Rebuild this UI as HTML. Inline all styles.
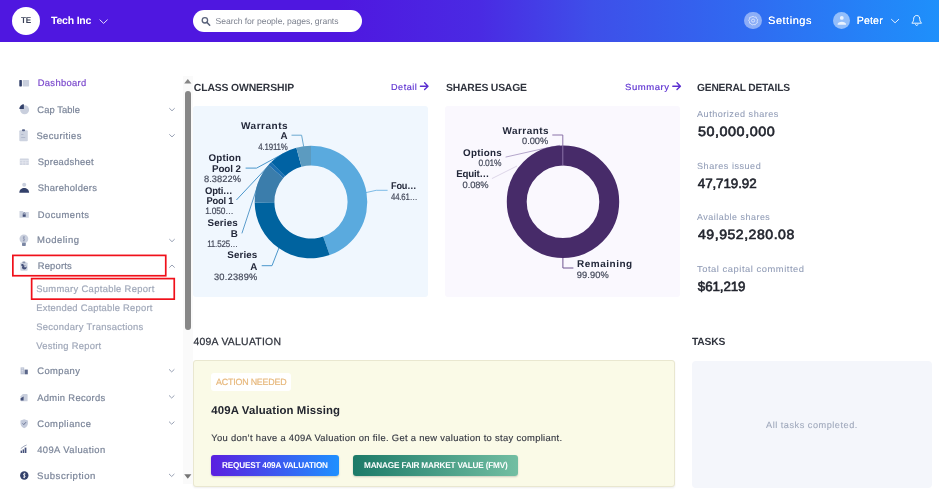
<!DOCTYPE html>
<html><head><meta charset="utf-8"><title>Dashboard</title>
<style>
html,body{margin:0;padding:0;}
body{text-rendering:geometricPrecision;width:939px;height:490px;position:relative;overflow:hidden;background:#fff;font-family:"Liberation Sans",sans-serif;}
.abs{position:absolute;}
#hdr{left:0;top:0;width:939px;height:42px;background:linear-gradient(90deg,#4f17e0 0%,#4f17e0 36%,#4a2ae3 51%,#3e4fe9 63%,#3168f0 78%,#1e90fb 100%);}
.card{position:absolute;border-radius:3px;}
</style></head><body>
<div id="hdr" class="abs"></div>
<div class="abs" style="left:12px;top:7px;width:28px;height:28px;border-radius:50%;background:#fff;"></div>
<div class="abs" style="left:193px;top:10px;width:169px;height:22px;border-radius:11px;background:#fff;"></div>
<div class="abs" style="left:744.4px;top:11.9px;width:17.4px;height:17.4px;border-radius:50%;background:rgba(255,255,255,.45);"></div>
<div class="abs" style="left:833.3px;top:12.2px;width:17px;height:17px;border-radius:50%;background:rgba(255,255,255,.5);"></div>

<!-- cards -->
<div class="card" style="left:193.2px;top:106px;width:234.7px;height:190.5px;background:#f0f7fe;"></div>
<div class="card" style="left:445.4px;top:106px;width:234.8px;height:190.5px;background:#faf8fe;"></div>
<div class="card" style="left:193px;top:360.3px;width:480px;height:124.8px;background:#fafae7;border:1px solid #e9e7d0;box-shadow:0 1px 2px rgba(0,0,0,.07);"></div>
<div class="card" style="left:691.5px;top:360.5px;width:240.5px;height:127px;background:#f4f6fb;border-radius:4px;"></div>
<div class="abs" style="left:211.3px;top:372.8px;width:79.8px;height:18px;border-radius:3px;background:#fff;"></div>
<div class="abs" style="left:211.3px;top:455px;width:127.3px;height:20.6px;border-radius:3px;background:linear-gradient(90deg,#5a1fe0,#1f90ff);box-shadow:0 1px 2px rgba(0,0,0,.18);"></div>
<div class="abs" style="left:352.7px;top:455px;width:165px;height:20.6px;border-radius:3px;background:linear-gradient(90deg,#1c7a68,#72bea2);box-shadow:0 1px 2px rgba(0,0,0,.18);"></div>

<!-- red boxes -->

<!-- scrollbar -->
<div class="abs" style="left:183px;top:76px;width:9.5px;height:408px;background:#fafafa;"></div>
<div class="abs" style="left:184.6px;top:91px;width:6.4px;height:239px;border-radius:3.2px;background:#878787;"></div>

<svg class="abs" style="left:0;top:0" width="939" height="490" viewBox="0 0 939 490">
<path d="M291.5,135.2H301.6L303.7,146.7" fill="none" stroke="#6aa9d0" stroke-width="1"/>
<path d="M245.6,168.1H256.6L283.0,153.8" fill="none" stroke="#4b97cc" stroke-width="1"/>
<path d="M236.4,200.0L270.1,164.1" fill="none" stroke="#4b97cc" stroke-width="1"/>
<path d="M241.9,233.4L258.6,182.7" fill="none" stroke="#5b9ccb" stroke-width="1"/>
<path d="M261.7,265.7H272L279.0,247.7" fill="none" stroke="#4b97cc" stroke-width="1"/>
<path d="M366.0,192.6L376.2,190.3H387.6" fill="none" stroke="#7dbbe6" stroke-width="1"/>
<path d="M311.00,145.70A56.3,56.3 0 0 1 329.70,255.10L323.16,236.52A36.6,36.6 0 0 0 311.00,165.40Z" fill="#5aaade"/>
<path d="M329.70,255.10A56.3,56.3 0 0 1 254.70,202.53L274.40,202.34A36.6,36.6 0 0 0 323.16,236.52Z" fill="#00639f"/>
<path d="M254.70,202.53A56.3,56.3 0 0 1 268.48,165.10L283.36,178.01A36.6,36.6 0 0 0 274.40,202.34Z" fill="#3b7dab"/>
<path d="M268.48,165.10A56.3,56.3 0 0 1 271.01,162.37L285.00,176.24A36.6,36.6 0 0 0 283.36,178.01Z" fill="#1a6fb2"/>
<path d="M271.01,162.37A56.3,56.3 0 0 1 296.34,147.64L301.47,166.66A36.6,36.6 0 0 0 285.00,176.24Z" fill="#0062a3"/>
<path d="M296.34,147.64A56.3,56.3 0 0 1 311.00,145.70L311.00,165.40A36.6,36.6 0 0 0 301.47,166.66Z" fill="#5c9bc0"/>
<path d="M491.9,178.6L517,166" fill="none" stroke="#ddd6e8" stroke-width="1"/>
<path d="M505.6,157.1L542,148.9L560,145.3" fill="none" stroke="#b4a6cb" stroke-width="1"/>
<path d="M562.9,258L562.9,268H573.4" fill="none" stroke="#6e5590" stroke-width="1"/>
<circle cx="563.0" cy="201.8" r="46.25" fill="none" stroke="#472b69" stroke-width="19.900000000000006"/>
<path d="M552.3,135H562.8V165.4" fill="none" stroke="#8a72a8" stroke-width="1"/><!-- header: chevrons -->
<path d="M99.6,19.6L103.6,23.4L107.6,19.6" fill="none" stroke="#e6ddff" stroke-width="1"/>
<path d="M891.2,19.1L895.1,22.8L899,19.1" fill="none" stroke="#e6f0ff" stroke-width="1"/>
<!-- search icon -->
<circle cx="204.9" cy="20.3" r="2.7" fill="none" stroke="#59627a" stroke-width="1.3"/>
<path d="M206.9,22.4L209.7,25.2" stroke="#59627a" stroke-width="1.5" stroke-linecap="round"/>
<!-- gear -->
<g transform="translate(753.1,20.6) scale(.82)" fill="none" stroke="#fff" stroke-opacity=".8" stroke-width="0.9" stroke-linejoin="round">
<path d="M0,-5.2L1.6,-4.2L3.6,-4.4L4.2,-2.5L5.6,-1.2L4.9,0.7L5.3,2.6L3.6,3.5L2.6,5.1L0.7,4.8L-1.2,5.4L-2.4,3.9L-4.3,3.2L-4.3,1.3L-5.4,-0.3L-4.3,-1.9L-4.2,-3.8L-2.3,-4.3Z"/>
<circle cx="0" cy="0" r="1.9"/>
</g>
<!-- person -->
<circle cx="841.8" cy="17.9" r="1.9" fill="#fff" fill-opacity=".8"/>
<path d="M837.5,24.7C837.5,20.9 846.1,20.9 846.1,24.7Z" fill="#fff" fill-opacity=".8"/>
<!-- bell -->
<path d="M916.7,15.5C919.2,15.5 919.8,17.6 919.8,19.4C919.8,21.6 921.2,22.4 921.5,23.2H911.9C912.2,22.4 913.6,21.6 913.6,19.4C913.6,17.6 914.2,15.5 916.7,15.5Z" fill="none" stroke="#fff" stroke-width="0.95" stroke-linejoin="round"/>
<path d="M915.4,24.3C915.7,25.8 917.7,25.8 918,24.3" fill="none" stroke="#fff" stroke-width="0.95"/>
<!-- arrows (Detail / Summary) -->
<g fill="none" stroke="#5b2fd0" stroke-width="1.4" stroke-linecap="round" stroke-linejoin="round">
<path d="M420.4,86.2H427.8M424.6,82.8L428,86.2L424.6,89.6"/>
<path d="M672.8,86.2H680.2M677,82.8L680.4,86.2L677,89.6"/>
</g>
<!-- scrollbar arrows -->
<path d="M184.2,83.6L187.8,79L191.4,83.6Z" fill="#858585"/>
<path d="M184.2,474.2L187.8,478.7L191.4,474.2Z" fill="#757575"/>
<!-- sidebar chevrons -->
<g fill="none" stroke="#98a1b4" stroke-width="1">
<path d="M169.3,108.2L172,110.8L174.7,108.2"/>
<path d="M169.3,134.3L172,136.9L174.7,134.3"/>
<path d="M169.3,239.1L172,241.7L174.7,239.1"/>
<path d="M169.3,267.6L172,265L174.7,267.6"/>
<path d="M169,369.3L171.7,371.9L174.4,369.3"/>
<path d="M169,395.4L171.7,398L174.4,395.4"/>
<path d="M169,421.6L171.7,424.2L174.4,421.6"/>
<path d="M169,473.9L171.7,476.5L174.4,473.9"/>
</g>
<!-- sidebar icons -->
<g>
<!-- dashboard -->
<rect x="19.3" y="80.1" width="2.6" height="6.3" rx="0.6" fill="#33416a"/>
<rect x="22.7" y="80.1" width="6.4" height="6.3" rx="0.6" fill="#c9cfdd"/>
<!-- cap table -->
<circle cx="24.6" cy="109.8" r="4.5" fill="#c9cfdd"/>
<path d="M23.9,108.9V104.3A4.6,4.6 0 0 0 19.3,108.9Z" fill="#33416a"/>
<!-- securities -->
<rect x="19.3" y="130.2" width="8.5" height="11" rx="1" fill="#cdd3e0"/>
<rect x="22" y="129.2" width="3" height="2" rx="0.8" fill="#5b678a"/>
<path d="M21.2,134.5H23.4M21.2,137.5H25.2" stroke="#aab2c6" stroke-width="0.8"/>
<!-- spreadsheet -->
<rect x="19.8" y="158.5" width="9" height="6.6" rx="0.6" fill="#d0d5e1"/>
<path d="M19.8,160.6H28.8M19.8,162.8H28.8M22.8,160.6V165.1M25.8,160.6V165.1" stroke="#eceff5" stroke-width="0.6"/>
<!-- shareholders -->
<circle cx="24.2" cy="184.8" r="2" fill="#c9cfdd"/>
<path d="M19.3,192.8C19.3,186.4 29.1,186.4 29.1,192.8Z" fill="#33416a"/>
<!-- documents -->
<path d="M19.5,211H22.6L23.6,212H28.8V217.8H19.5Z" fill="#cdd3e0"/>
<rect x="22.7" y="214.4" width="3" height="2.4" fill="#45517a"/>
<path d="M23.3,214.4V213.6A0.9,0.9 0 0 1 25.1,213.6V214.4" fill="none" stroke="#45517a" stroke-width="0.6"/>
<!-- modeling -->
<circle cx="23.9" cy="238.8" r="4.4" fill="#c9cfdd"/>
<rect x="22" y="242.8" width="3.8" height="3.2" rx="0.8" fill="#7a86a3"/>
<path d="M24.9,237.2C23.2,236.4 22.6,238.4 23.9,238.8C25.3,239.2 24.7,241.2 22.9,240.4M23.9,236V241.6" fill="none" stroke="#7f8aa6" stroke-width="0.6"/>
<!-- reports -->
<rect x="20.3" y="262.4" width="7.3" height="8.3" rx="0.8" fill="#cdd3e0"/>
<rect x="22.4" y="261.6" width="3" height="1.6" rx="0.4" fill="#8a94ad"/>
<circle cx="24.3" cy="267.3" r="2.3" fill="#45517a"/>
<path d="M24.3,267.3V265A2.3,2.3 0 0 1 26.6,267.3Z" fill="#cdd3e0"/>
<rect x="21.4" y="264" width="2" height="2" fill="#45517a"/>
<!-- company -->
<rect x="20.6" y="367.4" width="3.6" height="6.9" fill="#b9c0d2"/>
<rect x="24.6" y="369.6" width="3.2" height="4.7" fill="#5b678a"/>
<path d="M21.5,368.8H23.3M21.5,370.4H23.3M21.5,372H23.3" stroke="#eef0f6" stroke-width="0.6"/>
<!-- admin records -->
<path d="M22.8,394H26.6C27.2,394 27.6,394.4 27.6,395V400.4C27.6,401 27.2,401.2 26.6,401.2H21.6C21,401.2 20.6,400.8 20.6,400.2V396.2Z" fill="#c9cfdd"/>
<path d="M20.6,398.2L23.6,396.4V400.6H20.6Z" fill="#45517a"/>
<!-- compliance -->
<path d="M24.2,419.2L27.9,420.4V423.6C27.9,426 26,427.4 24.2,428.2C22.4,427.4 20.5,426 20.5,423.6V420.4Z" fill="#c3cadb"/>
<path d="M22.6,423.4L23.8,424.6L26,422.2" fill="none" stroke="#5b678a" stroke-width="0.9"/>
<!-- 409a -->
<rect x="20.6" y="450.6" width="1.4" height="2.4" fill="#45517a"/>
<rect x="22.6" y="449.4" width="1.4" height="3.6" fill="#45517a"/>
<rect x="24.6" y="447.6" width="1.8" height="5.4" fill="#45517a"/>
<path d="M20.8,448.6L24,446.2L26.6,445" fill="none" stroke="#8a94ad" stroke-width="0.8"/>
<!-- subscription -->
<circle cx="24.3" cy="475.5" r="4.2" fill="#33416a"/>
<path d="M25.5,473.9C23.6,473 22.8,475 24.3,475.5C25.9,476 25.1,478 23.1,477.1M24.3,472.8V478.2" fill="none" stroke="#fff" stroke-width="0.8"/>
</g>
<!-- red boxes -->
<rect x="12.85" y="255.4" width="152.9" height="20.35" fill="none" stroke="#f0101a" stroke-width="1.7"/>
<rect x="31.65" y="278.6" width="142.6" height="20.55" fill="none" stroke="#f0101a" stroke-width="1.7"/>

</svg>
<div id="txt" style="position:absolute;left:0;top:0;width:939px;height:490px;will-change:transform;">
<span id="t0" style="position:absolute;top:16.20px;font-size:8.5px;line-height:8.5px;font-weight:700;color:#3a4158;white-space:nowrap;letter-spacing:-0.200px;left:21.00px;transform:scaleX(0.9555);transform-origin:0 0;">TE</span>
<span id="t1" style="position:absolute;top:16.33px;font-size:10.6px;line-height:10.6px;font-weight:700;color:#ffffff;white-space:nowrap;letter-spacing:-0.200px;left:50.60px;transform:scaleX(0.9901);transform-origin:0 0;">Tech Inc</span>
<span id="t2" style="position:absolute;top:16.72px;font-size:8.6px;line-height:8.6px;font-weight:400;color:#7d828f;white-space:nowrap;letter-spacing:-0.055px;left:215.50px;">Search for people, pages, grants</span>
<span id="t3" style="position:absolute;top:16.33px;font-size:10.6px;line-height:10.6px;font-weight:400;color:#ffffff;white-space:nowrap;text-shadow:0 0 .3px #fff;letter-spacing:0.500px;left:768.00px;transform:scaleX(1.0411);transform-origin:0 0;">Settings</span>
<span id="t4" style="position:absolute;top:16.33px;font-size:10.6px;line-height:10.6px;font-weight:400;color:#ffffff;white-space:nowrap;text-shadow:0 0 .3px #fff;letter-spacing:0.168px;left:856.70px;">Peter</span>
<span id="t5" style="position:absolute;top:78.24px;font-size:9.4px;line-height:9.4px;font-weight:400;color:#7a48cc;white-space:nowrap;-webkit-text-stroke:.2px;letter-spacing:0.341px;left:37.70px;">Dashboard</span>
<span id="t6" style="position:absolute;top:105.04px;font-size:9.4px;line-height:9.4px;font-weight:400;color:#7b8599;white-space:nowrap;-webkit-text-stroke:.2px;letter-spacing:0.069px;left:37.30px;">Cap Table</span>
<span id="t7" style="position:absolute;top:131.24px;font-size:9.4px;line-height:9.4px;font-weight:400;color:#7b8599;white-space:nowrap;-webkit-text-stroke:.2px;letter-spacing:0.425px;left:36.40px;">Securities</span>
<span id="t8" style="position:absolute;top:157.44px;font-size:9.4px;line-height:9.4px;font-weight:400;color:#7b8599;white-space:nowrap;-webkit-text-stroke:.2px;letter-spacing:0.283px;left:37.70px;">Spreadsheet</span>
<span id="t9" style="position:absolute;top:183.04px;font-size:9.4px;line-height:9.4px;font-weight:400;color:#7b8599;white-space:nowrap;-webkit-text-stroke:.2px;letter-spacing:0.312px;left:37.70px;">Shareholders</span>
<span id="t10" style="position:absolute;top:209.84px;font-size:9.4px;line-height:9.4px;font-weight:400;color:#7b8599;white-space:nowrap;-webkit-text-stroke:.2px;letter-spacing:0.485px;left:37.70px;">Documents</span>
<span id="t11" style="position:absolute;top:235.44px;font-size:9.4px;line-height:9.4px;font-weight:400;color:#7b8599;white-space:nowrap;-webkit-text-stroke:.2px;letter-spacing:0.500px;left:36.90px;transform:scaleX(1.0109);transform-origin:0 0;">Modeling</span>
<span id="t12" style="position:absolute;top:261.44px;font-size:9.4px;line-height:9.4px;font-weight:400;color:#7b8599;white-space:nowrap;-webkit-text-stroke:.2px;letter-spacing:0.212px;left:37.70px;">Reports</span>
<span id="t13" style="position:absolute;top:284.24px;font-size:9.4px;line-height:9.4px;font-weight:400;color:#a0a8b9;white-space:nowrap;-webkit-text-stroke:.2px;letter-spacing:0.327px;left:36.20px;">Summary Captable Report</span>
<span id="t14" style="position:absolute;top:303.04px;font-size:9.4px;line-height:9.4px;font-weight:400;color:#a0a8b9;white-space:nowrap;-webkit-text-stroke:.2px;letter-spacing:0.252px;left:36.20px;">Extended Captable Report</span>
<span id="t15" style="position:absolute;top:322.24px;font-size:9.4px;line-height:9.4px;font-weight:400;color:#a0a8b9;white-space:nowrap;-webkit-text-stroke:.2px;letter-spacing:0.311px;left:36.20px;">Secondary Transactions</span>
<span id="t16" style="position:absolute;top:341.34px;font-size:9.4px;line-height:9.4px;font-weight:400;color:#a0a8b9;white-space:nowrap;-webkit-text-stroke:.2px;letter-spacing:0.269px;left:36.20px;">Vesting Report</span>
<span id="t17" style="position:absolute;top:366.04px;font-size:9.4px;line-height:9.4px;font-weight:400;color:#7b8599;white-space:nowrap;-webkit-text-stroke:.2px;letter-spacing:0.429px;left:37.20px;">Company</span>
<span id="t18" style="position:absolute;top:392.74px;font-size:9.4px;line-height:9.4px;font-weight:400;color:#7b8599;white-space:nowrap;-webkit-text-stroke:.2px;letter-spacing:0.326px;left:37.20px;">Admin Records</span>
<span id="t19" style="position:absolute;top:418.84px;font-size:9.4px;line-height:9.4px;font-weight:400;color:#7b8599;white-space:nowrap;-webkit-text-stroke:.2px;letter-spacing:0.465px;left:37.20px;">Compliance</span>
<span id="t20" style="position:absolute;top:445.04px;font-size:9.4px;line-height:9.4px;font-weight:400;color:#7b8599;white-space:nowrap;-webkit-text-stroke:.2px;letter-spacing:0.431px;left:37.20px;">409A Valuation</span>
<span id="t21" style="position:absolute;top:470.74px;font-size:9.4px;line-height:9.4px;font-weight:400;color:#7b8599;white-space:nowrap;-webkit-text-stroke:.2px;letter-spacing:0.500px;left:37.20px;transform:scaleX(1.0229);transform-origin:0 0;">Subscription</span>
<span id="t22" style="position:absolute;top:84.20px;font-size:10.4px;line-height:10.4px;font-weight:700;color:#30343e;white-space:nowrap;letter-spacing:-0.135px;left:193.80px;">CLASS OWNERSHIP</span>
<span id="t23" style="position:absolute;top:82.95px;font-size:8.8px;line-height:8.8px;font-weight:400;color:#5b2fd0;white-space:nowrap;-webkit-text-stroke:.15px;letter-spacing:0.500px;left:391.00px;transform:scaleX(1.0320);transform-origin:0 0;">Detail</span>
<span id="t24" style="position:absolute;top:84.20px;font-size:10.4px;line-height:10.4px;font-weight:700;color:#30343e;white-space:nowrap;letter-spacing:-0.195px;left:446.00px;">SHARES USAGE</span>
<span id="t25" style="position:absolute;top:82.95px;font-size:8.8px;line-height:8.8px;font-weight:400;color:#5b2fd0;white-space:nowrap;-webkit-text-stroke:.15px;letter-spacing:0.500px;left:625.00px;transform:scaleX(1.0827);transform-origin:0 0;">Summary</span>
<span id="t26" style="position:absolute;top:84.20px;font-size:10.4px;line-height:10.4px;font-weight:700;color:#30343e;white-space:nowrap;letter-spacing:-0.200px;left:697.30px;transform:scaleX(0.9864);transform-origin:0 0;">GENERAL DETAILS</span>
<span id="t27" style="position:absolute;top:338.40px;font-size:10.4px;line-height:10.4px;font-weight:400;color:#30343e;white-space:nowrap;-webkit-text-stroke:.25px;letter-spacing:0.282px;left:193.40px;">409A VALUATION</span>
<span id="t28" style="position:absolute;top:338.30px;font-size:10.4px;line-height:10.4px;font-weight:700;color:#30343e;white-space:nowrap;letter-spacing:-0.200px;left:691.50px;transform:scaleX(0.9895);transform-origin:0 0;">TASKS</span>
<span id="t29" style="position:absolute;top:109.95px;font-size:8.8px;line-height:8.8px;font-weight:400;color:#919cb6;white-space:nowrap;-webkit-text-stroke:.08px;letter-spacing:0.500px;left:697.30px;transform:scaleX(1.0316);transform-origin:0 0;">Authorized shares</span>
<span id="t30" style="position:absolute;top:125.06px;font-size:13.4px;line-height:13.4px;font-weight:400;color:#23262f;white-space:nowrap;-webkit-text-stroke:.6px;letter-spacing:0.500px;left:697.80px;transform:scaleX(1.0723);transform-origin:0 0;">50,000,000</span>
<span id="t31" style="position:absolute;top:162.35px;font-size:8.8px;line-height:8.8px;font-weight:400;color:#919cb6;white-space:nowrap;-webkit-text-stroke:.08px;letter-spacing:0.500px;left:697.30px;transform:scaleX(1.0316);transform-origin:0 0;">Shares issued</span>
<span id="t32" style="position:absolute;top:177.46px;font-size:13.4px;line-height:13.4px;font-weight:400;color:#23262f;white-space:nowrap;-webkit-text-stroke:.6px;letter-spacing:-0.097px;left:697.80px;">47,719.92</span>
<span id="t33" style="position:absolute;top:212.65px;font-size:8.8px;line-height:8.8px;font-weight:400;color:#919cb6;white-space:nowrap;-webkit-text-stroke:.08px;letter-spacing:0.500px;left:697.30px;transform:scaleX(1.0126);transform-origin:0 0;">Available shares</span>
<span id="t34" style="position:absolute;top:227.96px;font-size:13.4px;line-height:13.4px;font-weight:400;color:#23262f;white-space:nowrap;-webkit-text-stroke:.6px;letter-spacing:0.500px;left:697.80px;transform:scaleX(1.0508);transform-origin:0 0;">49,952,280.08</span>
<span id="t35" style="position:absolute;top:264.55px;font-size:8.8px;line-height:8.8px;font-weight:400;color:#919cb6;white-space:nowrap;-webkit-text-stroke:.08px;letter-spacing:0.500px;left:697.30px;transform:scaleX(1.0648);transform-origin:0 0;">Total capital committed</span>
<span id="t36" style="position:absolute;top:280.46px;font-size:13.4px;line-height:13.4px;font-weight:400;color:#23262f;white-space:nowrap;-webkit-text-stroke:.6px;letter-spacing:-0.118px;left:697.80px;">$61,219</span>
<span id="t37" style="position:absolute;top:121.70px;font-size:9.8px;line-height:9.8px;font-weight:700;color:#23283a;white-space:nowrap;letter-spacing:0.500px;right:650.89px;transform:scaleX(1.0217);transform-origin:100% 0;">Warrants</span>
<span id="t38" style="position:absolute;top:131.70px;font-size:9.8px;line-height:9.8px;font-weight:700;color:#23283a;white-space:nowrap;right:651.40px;">A</span>
<span id="t39" style="position:absolute;top:143.33px;font-size:9.3px;line-height:9.3px;font-weight:400;color:#454a5b;white-space:nowrap;-webkit-text-stroke:.2px;letter-spacing:-0.200px;right:651.57px;transform:scaleX(0.8502);transform-origin:100% 0;">4.1911%</span>
<span id="t40" style="position:absolute;top:154.10px;font-size:9.8px;line-height:9.8px;font-weight:700;color:#23283a;white-space:nowrap;letter-spacing:0.208px;right:697.79px;">Option</span>
<span id="t41" style="position:absolute;top:164.90px;font-size:9.8px;line-height:9.8px;font-weight:700;color:#23283a;white-space:nowrap;letter-spacing:-0.081px;right:698.08px;">Pool 2</span>
<span id="t42" style="position:absolute;top:175.23px;font-size:9.3px;line-height:9.3px;font-weight:400;color:#454a5b;white-space:nowrap;-webkit-text-stroke:.2px;letter-spacing:0.066px;right:697.93px;">8.3822%</span>
<span id="t43" style="position:absolute;top:187.00px;font-size:9.8px;line-height:9.8px;font-weight:700;color:#23283a;white-space:nowrap;letter-spacing:-0.200px;right:706.19px;transform:scaleX(0.9654);transform-origin:100% 0;">Opti&#8230;</span>
<span id="t44" style="position:absolute;top:196.90px;font-size:9.8px;line-height:9.8px;font-weight:700;color:#23283a;white-space:nowrap;letter-spacing:-0.200px;right:706.19px;transform:scaleX(0.9505);transform-origin:100% 0;">Pool 1</span>
<span id="t45" style="position:absolute;top:207.43px;font-size:9.3px;line-height:9.3px;font-weight:400;color:#454a5b;white-space:nowrap;-webkit-text-stroke:.2px;letter-spacing:-0.200px;right:705.58px;transform:scaleX(0.8998);transform-origin:100% 0;">1.050&#8230;</span>
<span id="t46" style="position:absolute;top:218.70px;font-size:9.8px;line-height:9.8px;font-weight:700;color:#23283a;white-space:nowrap;letter-spacing:0.136px;right:701.16px;">Series</span>
<span id="t47" style="position:absolute;top:229.70px;font-size:9.8px;line-height:9.8px;font-weight:700;color:#23283a;white-space:nowrap;right:701.30px;">B</span>
<span id="t48" style="position:absolute;top:240.43px;font-size:9.3px;line-height:9.3px;font-weight:400;color:#454a5b;white-space:nowrap;-webkit-text-stroke:.2px;letter-spacing:-0.200px;right:700.97px;transform:scaleX(0.8536);transform-origin:100% 0;">11.525&#8230;</span>
<span id="t49" style="position:absolute;top:251.10px;font-size:9.8px;line-height:9.8px;font-weight:700;color:#23283a;white-space:nowrap;letter-spacing:0.136px;right:681.56px;">Series</span>
<span id="t50" style="position:absolute;top:262.60px;font-size:9.8px;line-height:9.8px;font-weight:700;color:#23283a;white-space:nowrap;right:681.70px;">A</span>
<span id="t51" style="position:absolute;top:273.33px;font-size:9.3px;line-height:9.3px;font-weight:400;color:#454a5b;white-space:nowrap;-webkit-text-stroke:.2px;letter-spacing:0.204px;right:681.50px;">30.2389%</span>
<span id="t52" style="position:absolute;top:181.70px;font-size:9.8px;line-height:9.8px;font-weight:700;color:#23283a;white-space:nowrap;letter-spacing:-0.200px;left:391.00px;transform:scaleX(0.9355);transform-origin:0 0;">Fou&#8230;</span>
<span id="t53" style="position:absolute;top:192.63px;font-size:9.3px;line-height:9.3px;font-weight:400;color:#454a5b;white-space:nowrap;-webkit-text-stroke:.2px;letter-spacing:-0.200px;left:391.00px;transform:scaleX(0.8396);transform-origin:0 0;">44.61&#8230;</span>
<span id="t54" style="position:absolute;top:126.50px;font-size:9.8px;line-height:9.8px;font-weight:700;color:#23283a;white-space:nowrap;letter-spacing:0.500px;right:390.29px;transform:scaleX(1.0129);transform-origin:100% 0;">Warrants</span>
<span id="t55" style="position:absolute;top:137.13px;font-size:9.3px;line-height:9.3px;font-weight:400;color:#454a5b;white-space:nowrap;-webkit-text-stroke:.2px;letter-spacing:-0.044px;right:390.84px;">0.00%</span>
<span id="t56" style="position:absolute;top:148.70px;font-size:9.8px;line-height:9.8px;font-weight:700;color:#23283a;white-space:nowrap;letter-spacing:0.281px;right:437.02px;">Options</span>
<span id="t57" style="position:absolute;top:158.53px;font-size:9.3px;line-height:9.3px;font-weight:400;color:#454a5b;white-space:nowrap;-webkit-text-stroke:.2px;letter-spacing:-0.200px;right:437.48px;transform:scaleX(0.9032);transform-origin:100% 0;">0.01%</span>
<span id="t58" style="position:absolute;top:169.90px;font-size:9.8px;line-height:9.8px;font-weight:700;color:#23283a;white-space:nowrap;letter-spacing:-0.200px;right:450.20px;transform:scaleX(0.9911);transform-origin:100% 0;">Equit&#8230;</span>
<span id="t59" style="position:absolute;top:181.43px;font-size:9.3px;line-height:9.3px;font-weight:400;color:#454a5b;white-space:nowrap;-webkit-text-stroke:.2px;letter-spacing:-0.094px;right:450.49px;">0.08%</span>
<span id="t60" style="position:absolute;top:259.90px;font-size:9.8px;line-height:9.8px;font-weight:700;color:#23283a;white-space:nowrap;letter-spacing:0.500px;left:576.80px;transform:scaleX(1.0205);transform-origin:0 0;">Remaining</span>
<span id="t61" style="position:absolute;top:271.33px;font-size:9.3px;line-height:9.3px;font-weight:400;color:#454a5b;white-space:nowrap;-webkit-text-stroke:.2px;letter-spacing:0.091px;left:576.80px;">99.90%</span>
<span id="t62" style="position:absolute;top:377.58px;font-size:9px;line-height:9px;font-weight:400;color:#e7b87c;white-space:nowrap;-webkit-text-stroke:.2px;letter-spacing:-0.200px;left:216.00px;transform:scaleX(0.9872);transform-origin:0 0;">ACTION NEEDED</span>
<span id="t63" style="position:absolute;top:406.35px;font-size:11.4px;line-height:11.4px;font-weight:700;color:#23262f;white-space:nowrap;letter-spacing:0.120px;left:211.30px;">409A Valuation Missing</span>
<span id="t64" style="position:absolute;top:433.04px;font-size:9.4px;line-height:9.4px;font-weight:400;color:#353842;white-space:nowrap;-webkit-text-stroke:.15px;letter-spacing:0.321px;left:211.30px;">You don&#8217;t have a 409A Valuation on file. Get a new valuation to stay compliant.</span>
<span id="t65" style="position:absolute;top:461.10px;font-size:8.5px;line-height:8.5px;font-weight:700;color:#ffffff;white-space:nowrap;letter-spacing:-0.200px;left:222.00px;transform:scaleX(0.9642);transform-origin:0 0;">REQUEST 409A VALUATION</span>
<span id="t66" style="position:absolute;top:461.10px;font-size:8.5px;line-height:8.5px;font-weight:700;color:#ffffff;white-space:nowrap;letter-spacing:-0.200px;left:363.80px;transform:scaleX(0.9649);transform-origin:0 0;">MANAGE FAIR MARKET VALUE (FMV)</span>
<span id="t67" style="position:absolute;top:420.58px;font-size:9px;line-height:9px;font-weight:400;color:#9fa8bb;white-space:nowrap;-webkit-text-stroke:.1px;letter-spacing:0.500px;left:766.10px;transform:scaleX(1.0196);transform-origin:0 0;">All tasks completed.</span>
</div>
</body></html>
